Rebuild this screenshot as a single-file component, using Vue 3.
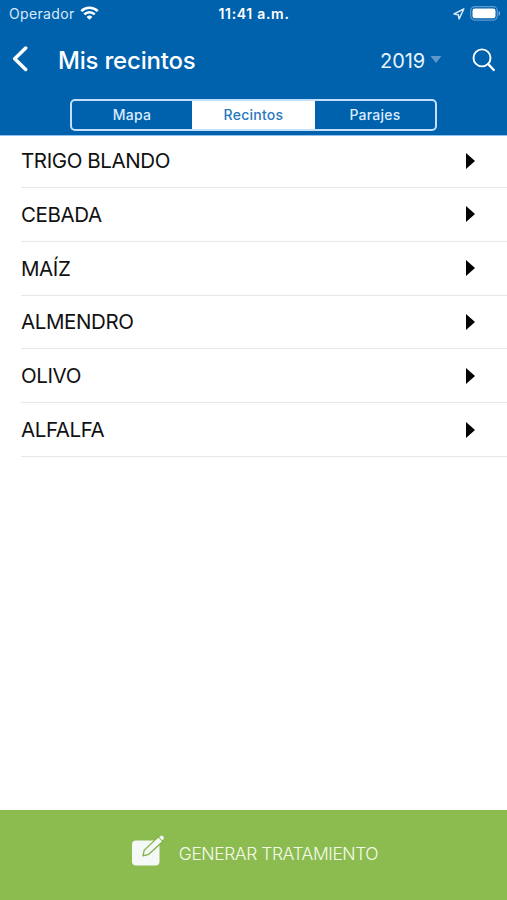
<script setup>
import { ref } from 'vue'

const tabs = ['Mapa', 'Recintos', 'Parajes']
const active = ref('Recintos')
const crops = ['TRIGO BLANDO', 'CEBADA', 'MAÍZ', 'ALMENDRO', 'OLIVO', 'ALFALFA']
</script>

<template>
  <div class="screen">
    <header class="header">
      <div class="status">
        <div class="carrier">
          <span class="operator">Operador</span>
          <svg class="wifi" width="19" height="14" viewBox="0 0 18 14">
            <g fill="none" stroke="#fff" stroke-width="2.6">
              <path d="M.8 5.2a11.6 11.6 0 0 1 16.4 0" />
              <path d="M3.8 8.4a7.4 7.4 0 0 1 10.4 0" />
            </g>
            <path d="M9 13.8 6.1 10.9a4.1 4.1 0 0 1 5.8 0z" fill="#fff" />
          </svg>
        </div>
        <span class="time">11:41 a.m.</span>
        <div class="indicators">
          <svg width="12" height="12" viewBox="0 0 12 12">
            <path d="M10.8 1 1 5.9l4.2.8.9 4.2z" fill="none" stroke="#d7e9f8" stroke-width="1.5" stroke-linejoin="round" />
          </svg>
          <svg class="battery" width="31" height="15" viewBox="0 0 31 15">
            <rect x=".7" y=".7" width="26.6" height="13.4" rx="4" fill="none" stroke="#5c9bd0" stroke-width="1.2" />
            <rect x="2.5" y="2.5" width="23" height="9.8" rx="2.2" fill="#fff" />
            <path d="M28.6 5v5c2-.8 2-4.2 0-5z" fill="#7badd8" />
          </svg>
        </div>
      </div>

      <nav class="nav">
        <svg class="back" width="18" height="28" viewBox="0 0 18 28">
          <path d="M15.7 4 4.7 14.8l11 10.7" fill="none" stroke="#fff" stroke-width="3.5" stroke-linecap="round" stroke-linejoin="round" />
        </svg>
        <h1 class="title">Mis recintos</h1>
        <div class="year">
          <span>2019</span>
          <svg width="12" height="7" viewBox="0 0 12 7"><path d="M.5 0h11L6 7z" fill="#5f98cb" /></svg>
        </div>
        <svg class="search" width="26" height="26" viewBox="0 0 26 26">
          <g fill="none" stroke="#fff" stroke-width="1.9" stroke-linecap="round">
            <circle cx="11" cy="10.9" r="8.5" />
            <path d="m17.2 17.100 5.600 5.900" stroke-width="2.300" />
          </g>
        </svg>
      </nav>

      <div class="tabs">
        <button v-for="tab in tabs" :key="tab" class="tab" :class="{ active: tab === active }" @click="active = tab">{{ tab }}</button>
      </div>
    </header>

    <main class="list">
      <div v-for="crop in crops" :key="crop" class="row">
        <span>{{ crop }}</span>
        <svg width="9" height="16" viewBox="0 0 9 16"><path d="M0 0v16l9-8z" /></svg>
      </div>
    </main>

    <footer class="footer">
      <svg width="34" height="33" viewBox="0 0 34 33">
        <rect x="1" y="5.5" width="27.5" height="25" rx="4" fill="#f4f8f7" />
        <path d="m12 20.8 1.3-5.7L27.3 1.9l4.6 4.5-14.2 12.9z" fill="#f4f8f7" stroke="#7fae45" stroke-width="1.3" stroke-linejoin="round" />
        <path d="m28 2.5 1.6-1.6q1-.7 2 .2l1 1q.8.9 0 1.8L31 5.5z" fill="#f4f8f7" />
        <path d="m27.7 2.3 3.6 3.6" stroke="#8cbc50" stroke-width=".8" />
      </svg>
      <span class="action">GENERAR TRATAMIENTO</span>
    </footer>
  </div>
</template>

<style>
body {
  margin: 0;
  background: #fff;
}
</style>

<style scoped>
.screen {
  display: flex;
  flex-direction: column;
  width: 100%;
  height: 900px;
  overflow: hidden;
  font-family: Inter, "Liberation Sans", sans-serif;
  background: #fff;
}

.header {
  box-sizing: border-box;
  height: 136px;
  flex: none;
  background: #0061ad;
  border-bottom: 1px solid #8fc3ee;
  color: #fff;
}

.status {
  display: grid;
  grid-template-columns: 1fr auto 1fr;
  align-items: center;
  height: 27px;
  padding: 0 6px 0 9px;
}

.carrier {
  display: flex;
  align-items: center;
  gap: 5px;
}

.operator {
  font-size: 14px;
  letter-spacing: 0.35px;
  color: #d9eafa;
}

.wifi {
  margin-top: -2px;
}

.time {
  margin-right: 2px;
  font-size: 14px;
  font-weight: 600;
  letter-spacing: 0.7px;
}

.indicators {
  display: flex;
  align-items: center;
  justify-content: flex-end;
  gap: 5px;
}

.battery {
  margin-top: -1px;
}

.nav {
  display: flex;
  align-items: center;
  height: 66px;
  padding: 0 10px 0 10px;
}

.back {
  margin-top: -4px;
}

.title {
  margin: 1px auto 0 30px;
  font-size: 24px;
  font-weight: 450;
  line-height: 30px;
  letter-spacing: -0.2px;
}

.year {
  display: flex;
  align-items: center;
  gap: 5px;
  margin: 2px 29px 0 0;
  font-size: 20px;
  letter-spacing: -0.1px;
  color: #e8f3fd;
}

.year svg {
  margin-top: -4px;
}

.tabs {
  box-sizing: border-box;
  display: grid;
  grid-template-columns: 120px 123px 120px;
  width: 367px;
  height: 32px;
  margin: 6px auto 0;
  border: 2px solid #c2e0fb;
  border-radius: 5px;
  overflow: hidden;
}

.tab {
  padding: 0 0 2px;
  border: 0;
  background: none;
  color: #d9ecff;
  font: 450 14px Inter, "Liberation Sans", sans-serif;
  letter-spacing: 0.25px;
}

.tab.active {
  background: #fff;
  color: #2878ba;
}

.list {
  flex: 1;
  padding-left: 21px;
}

.row {
  box-sizing: border-box;
  display: flex;
  align-items: center;
  justify-content: space-between;
  height: 53.8px;
  padding-right: 32px;
  border-bottom: 1px solid #e8e8e8;
  font-size: 20.5px;
  letter-spacing: -0.4px;
  color: #111;
}

.row:first-child {
  height: 52px;
  padding-bottom: 2px;
}

.footer {
  display: flex;
  justify-content: center;
  box-sizing: border-box;
  height: 90px;
  padding: 25px 0 0 2px;
  gap: 14px;
  background: #8cbc50;
}

.action {
  margin-top: 9px;
  font-size: 17.5px;
  line-height: 20px;
  font-weight: 350;
  letter-spacing: -0.45px;
  color: #f4faea;
}
</style>
